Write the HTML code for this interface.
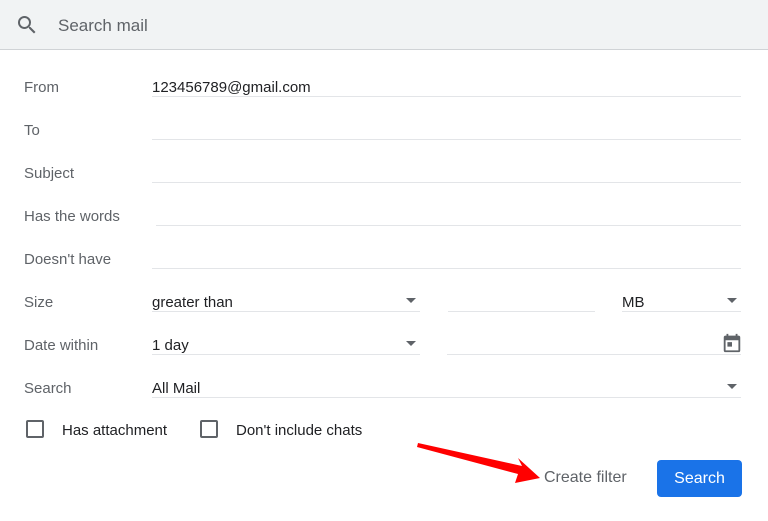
<!DOCTYPE html><html><head><style>
body{margin:0;width:768px;height:521px;background:#fff;font-family:"Liberation Sans",Arial,sans-serif;position:relative;overflow:hidden}
.hdr{position:absolute;left:0;top:0;width:768px;height:49px;background:#f1f3f4;border-bottom:1px solid #d0d3d6}
.hdr span{position:absolute;left:58px;top:16px;font-size:17px;color:#5f6368}
.lbl{position:absolute;left:24px;font-size:15px;color:#5f6368}
.val{position:absolute;font-size:15px;color:#202124}
.ln{position:absolute;height:1px;background:#e3e5e8}
.tri{position:absolute;width:0;height:0;border-left:5px solid transparent;border-right:5px solid transparent;border-top:5px solid #5f6368}
.cb{position:absolute;top:420px;width:14px;height:14px;border:2px solid #5f6368;border-radius:2px}
</style></head><body>
<div class="hdr"><svg style="position:absolute;left:15px;top:13px" width="24" height="24" viewBox="0 0 24 24"><path fill="#5f6368" d="M15.5 14h-.79l-.28-.27A6.470 6.470 0 0 0 16 9.5 6.5 6.5 0 1 0 9.5 16c1.61 0 3.090-.59 4.230-1.570l.27.28v.79l5 4.990L20.490 19l-4.990-5zm-6 0C7.010 14 5 11.990 5 9.5S7.010 5 9.5 5 14 7.010 14 9.5 11.990 14 9.5 14z"/></svg><span>Search mail</span></div>

<div class="lbl" style="top:79px">From</div><div class="val" style="left:152px;top:79px">123456789@gmail.com</div><div class="ln" style="left:152px;top:96px;width:589px"></div>
<div class="lbl" style="top:122px">To</div><div class="ln" style="left:152px;top:139px;width:589px"></div>
<div class="lbl" style="top:165px">Subject</div><div class="ln" style="left:152px;top:182px;width:589px"></div>
<div class="lbl" style="top:208px">Has the words</div><div class="ln" style="left:156px;top:225px;width:585px"></div>
<div class="lbl" style="top:251px">Doesn't have</div><div class="ln" style="left:152px;top:268px;width:589px"></div>

<div class="lbl" style="top:294px">Size</div><div class="val" style="left:152px;top:294px">greater than</div><div class="tri" style="left:406px;top:298px"></div><div class="ln" style="left:152px;top:311px;width:268px"></div>
<div class="ln" style="left:448px;top:311px;width:147px"></div>
<div class="val" style="left:622px;top:294px">MB</div><div class="tri" style="left:727px;top:298px"></div><div class="ln" style="left:622px;top:311px;width:119px"></div>

<div class="lbl" style="top:337px">Date within</div><div class="val" style="left:152px;top:337px">1 day</div><div class="tri" style="left:406px;top:341px"></div><div class="ln" style="left:152px;top:354px;width:268px"></div>
<div class="ln" style="left:447px;top:354px;width:294px"></div>
<svg style="position:absolute;left:721px;top:332px" width="22" height="22" viewBox="0 0 24 24"><path fill="#5f6368" d="M19 4h-1V2h-2v2H8V2H6v2H5a2 2 0 0 0-2 2v14a2 2 0 0 0 2 2h14a2 2 0 0 0 2-2V6a2 2 0 0 0-2-2zm0 16H5V9h14v11zM7 11h5v5H7z"/></svg>

<div class="lbl" style="top:380px">Search</div><div class="val" style="left:152px;top:380px">All Mail</div><div class="tri" style="left:727px;top:384px"></div><div class="ln" style="left:152px;top:397px;width:589px"></div>

<div class="cb" style="left:26px"></div><div class="val" style="left:62px;top:422px">Has attachment</div>
<div class="cb" style="left:200px"></div><div class="val" style="left:236px;top:422px">Don't include chats</div>

<div style="position:absolute;left:544px;top:469px;font-size:16px;color:#5f6368">Create filter</div>
<div style="position:absolute;left:657px;top:460px;width:85px;height:37px;background:#1a73e8;border-radius:4px;color:#fff;font-size:16px;text-align:center;line-height:37px">Search</div>
<svg style="position:absolute;left:0;top:0" width="768" height="521"><path fill="#f00" d="M418 443 L522 466 L518 458 L540 478 L515 483 L518 474 L417 447Z"/></svg>
</body></html>
